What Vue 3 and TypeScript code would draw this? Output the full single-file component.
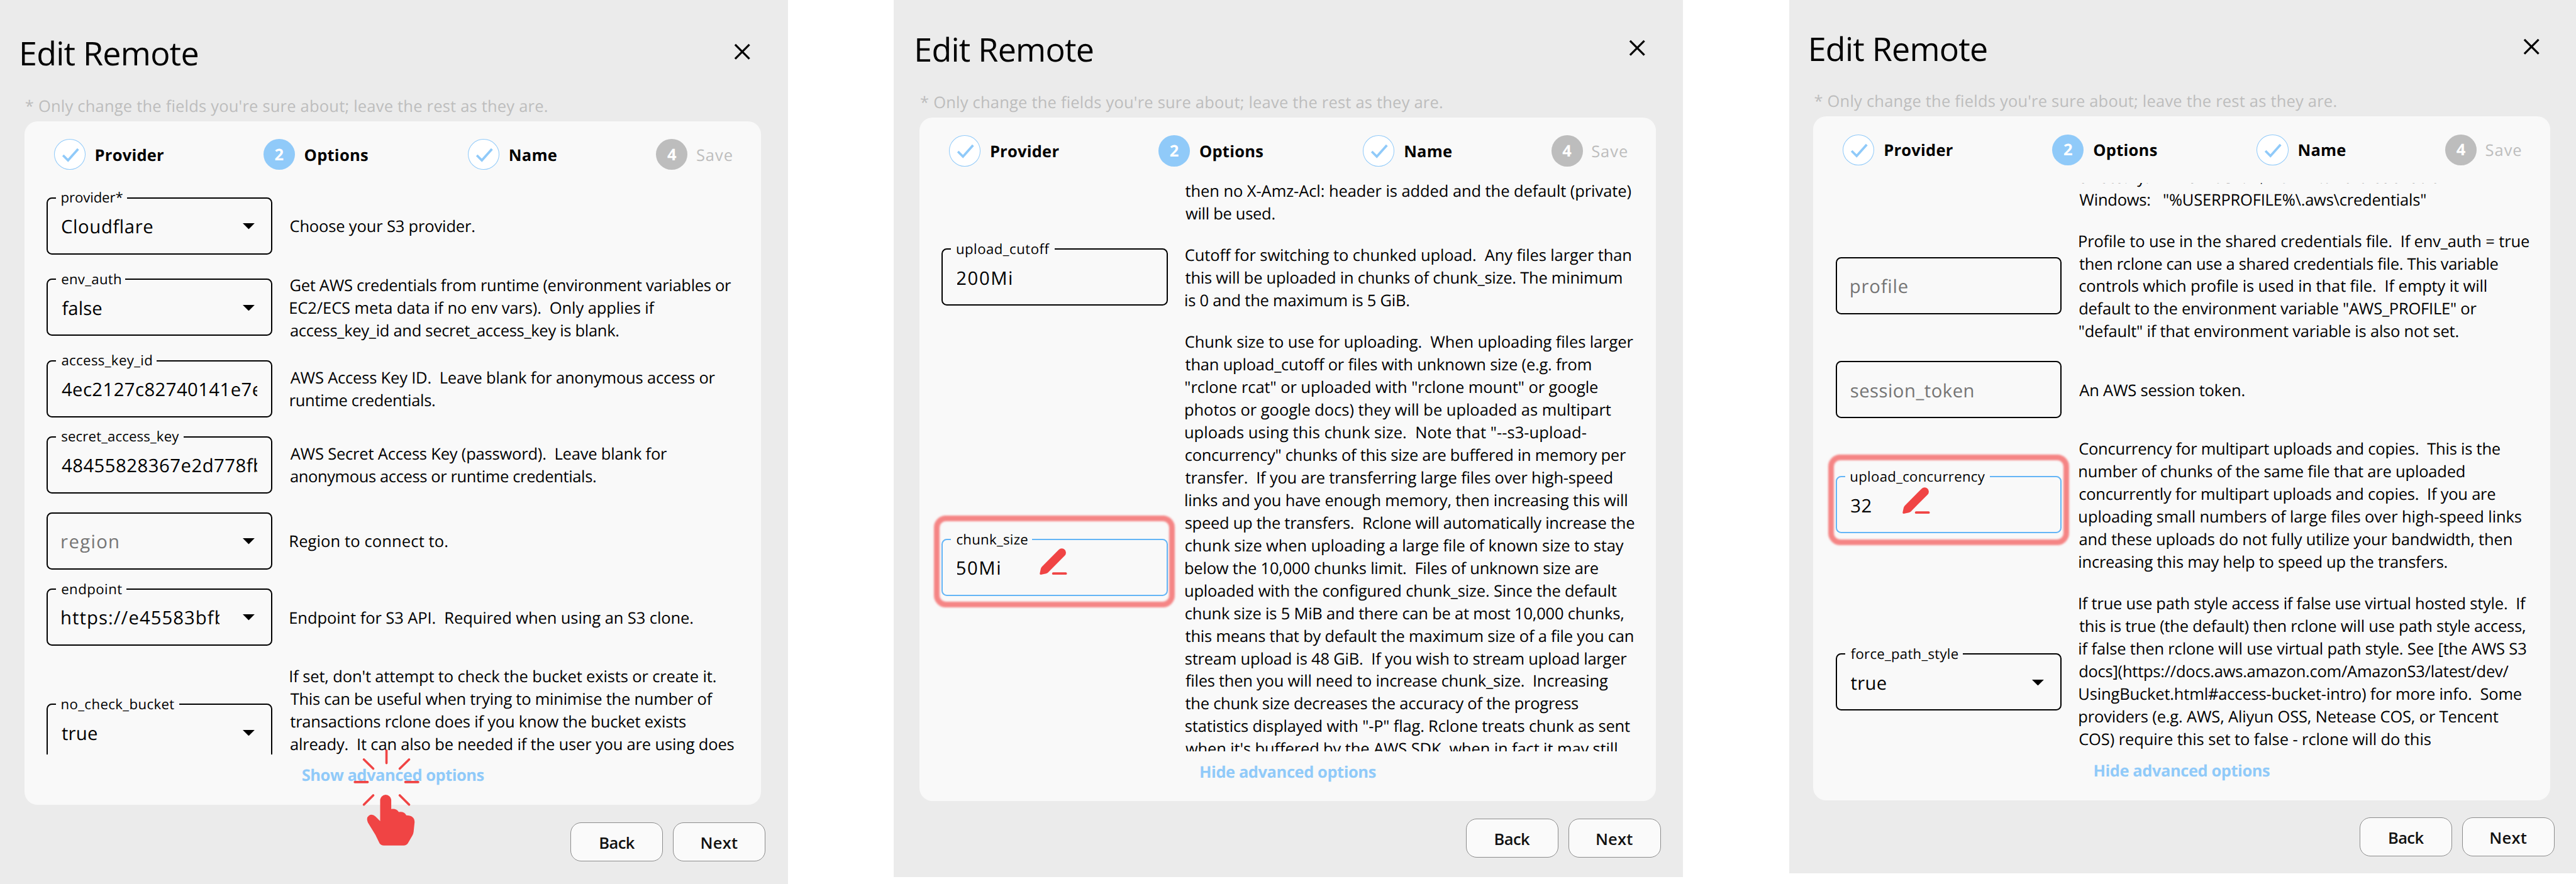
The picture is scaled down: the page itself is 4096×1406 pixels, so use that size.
<script setup lang="ts">
type Line = [string, number]
interface Field {
  label?: string
  labelW?: number
  value: string
  valueW: number
  select?: boolean
  empty?: boolean
  focused?: boolean
  ring?: { left: number; top: number; width: number; height: number }
  pen?: { left: number; top: number }
}
interface Row { field?: Field; lines: Line[] }
interface Panel {
  cls: string
  start: number
  toggle: string
  toggleW: number
  toggleX: number
  click?: boolean
  rows: Row[]
}

const FAMILY = '"Open Sans"'
const ctx = document.createElement('canvas').getContext('2d')!

/* Tracks a line of text so that its ink spans `width` pixels from the left edge of its box. */
function fit(text: string, size: number, width: number, weight = 400) {
  if (!text) return {}
  ctx.font = `${weight} ${size * 10}px ${FAMILY}`
  const m = ctx.measureText(text)
  const ink = (m.actualBoundingBoxRight + m.actualBoundingBoxLeft) / 10
  const n = Math.max(1, text.length - 1)
  return {
    letterSpacing: `${((width - ink) / n).toFixed(3)}px`,
    marginLeft: `${(m.actualBoundingBoxLeft / 10).toFixed(2)}px`,
  }
}

const steps = [
  { n: '1', name: 'Provider', w: 114, x: 49.5, state: 'done' },
  { n: '2', name: 'Options', w: 106, x: 402, state: 'current' },
  { n: '3', name: 'Name', w: 78.5, x: 746, state: 'done' },
  { n: '4', name: 'Save', w: 59, x: 1063, state: 'todo' },
]

/* An empty line keeps its height: it stands for text scrolled out of the list. */
const panels: Panel[] = [
  {
    cls: 'first', start: 15.8, toggle: 'Show advanced options', toggleW: 306, toggleX: 467.5, click: true,
    rows: [
      { field: { label: 'provider*', labelW: 102, value: 'Cloudflare', valueW: 152.5, select: true },
        lines: [['Choose your S3 provider.', 310]] },
      { field: { label: 'env_auth', labelW: 99, value: 'false', valueW: 66.7, select: true },
        lines: [
          ['Get AWS credentials from runtime (environment variables or', 742],
          ['EC2/ECS meta data if no env vars).  Only applies if', 614],
          ['access_key_id and secret_access_key is blank.', 552.5],
        ] },
      { field: { label: 'access_key_id', labelW: 151, value: '4ec2127c82740141e7e', valueW: 336 },
        lines: [
          ['AWS Access Key ID.  Leave blank for anonymous access or', 715],
          ['runtime credentials.', 243],
        ] },
      { field: { label: 'secret_access_key', labelW: 197, value: '48455828367e2d778fb', valueW: 339 },
        lines: [
          ['AWS Secret Access Key (password).  Leave blank for', 634],
          ['anonymous access or runtime credentials.', 514],
        ] },
      { field: { value: 'region', valueW: 95, select: true, empty: true },
        lines: [['Region to connect to.', 264.5]] },
      { field: { label: 'endpoint', labelW: 101, value: 'https://e45583bfb', valueW: 274, select: true },
        lines: [['Endpoint for S3 API.  Required when using an S3 clone.', 677.5]] },
      { field: { label: 'no_check_bucket', labelW: 189, value: 'true', valueW: 59, select: true },
        lines: [
          ["If set, don't attempt to check the bucket exists or create it.", 716],
          ['This can be useful when trying to minimise the number of', 711.5],
          ['transactions rclone does if you know the bucket exists', 665.5],
          ['already.  It can also be needed if the user you are using does', 746.5],
          ['', 0],
          ['', 0],
        ] },
    ],
  },
  {
    cls: 'second', start: -8.5, toggle: 'Hide advanced options', toggleW: 295, toggleX: 473,
    rows: [
      { lines: [
        ['then no X-Amz-Acl: header is added and the default (private)', 750],
        ['will be used.', 150],
      ] },
      { field: { label: 'upload_cutoff', labelW: 156, value: '200Mi', valueW: 92 },
        lines: [
          ['Cutoff for switching to chunked upload.  Any files larger than', 750],
          ['this will be uploaded in chunks of chunk_size. The minimum', 734.6],
          ['is 0 and the maximum is 5 GiB.', 376.4],
        ] },
      { field: { label: 'chunk_size', labelW: 118.7, value: '50Mi', valueW: 72, focused: true,
          ring: { left: -15.5, top: -41, width: 405, height: 154 }, pen: { left: 163, top: 13.5 } },
        lines: [
          ['Chunk size to use for uploading.  When uploading files larger', 753.7],
          ['than upload_cutoff or files with unknown size (e.g. from', 682.6],
          ['"rclone rcat" or uploaded with "rclone mount" or google', 693.8],
          ['photos or google docs) they will be uploaded as multipart', 716.4],
          ['uploads using this chunk size.  Note that "--s3-upload-', 674.8],
          ['concurrency" chunks of this size are buffered in memory per', 741.5],
          ['transfer.  If you are transferring large files over high-speed', 718],
          ['links and you have enough memory, then increasing this will', 743],
          ['speed up the transfers.  Rclone will automatically increase the', 755.4],
          ['chunk size when uploading a large file of known size to stay', 738],
          ['below the 10,000 chunks limit.  Files of unknown size are', 694.7],
          ['uploaded with the configured chunk_size. Since the default', 726],
          ['chunk size is 5 MiB and there can be at most 10,000 chunks,', 737],
          ['this means that by default the maximum size of a file you can', 753.7],
          ['stream upload is 48 GiB.  If you wish to stream upload larger', 743],
          ['files then you will need to increase chunk_size.  Increasing', 711],
          ['the chunk size decreases the accuracy of the progress', 661],
          ['statistics displayed with "-P" flag. Rclone treats chunk as sent', 748.5],
          ["when it's buffered by the AWS SDK, when in fact it may still", 726],
          ['', 0],
          ['', 0],
        ] },
    ],
  },
  {
    cls: 'third', start: -30.5, toggle: 'Hide advanced options', toggleW: 295, toggleX: 473,
    rows: [
      { lines: [
        ['directory.    Linux/OSX: "$HOME/.aws/credentials"', 616],
        ['Windows:   "%USERPROFILE%\\.aws\\credentials"', 583],
      ] },
      { field: { value: 'profile', valueW: 95, empty: true },
        lines: [
          ['Profile to use in the shared credentials file.  If env_auth = true', 756.8],
          ['then rclone can use a shared credentials file. This variable', 704.6],
          ['controls which profile is used in that file.  If empty it will', 684.9],
          ['default to the environment variable "AWS_PROFILE" or', 668.6],
          ['"default" if that environment variable is also not set.', 637.7],
        ] },
      { field: { value: 'session_token', valueW: 206, empty: true },
        lines: [['An AWS session token.', 277.7]] },
      { field: { label: 'upload_concurrency', labelW: 225.4, value: '32', valueW: 34, focused: true,
          ring: { left: -14.5, top: -39, width: 405, height: 153 }, pen: { left: 110.5, top: 16.5 } },
        lines: [
          ['Concurrency for multipart uploads and copies.  This is the', 708],
          ['number of chunks of the same file that are uploaded', 648],
          ['concurrently for multipart uploads and copies.  If you are', 700],
          ['uploading small numbers of large files over high-speed links', 744],
          ['and these uploads do not fully utilize your bandwidth, then', 727.7],
          ['increasing this may help to speed up the transfers.', 618.8],
        ] },
      { field: { label: 'force_path_style', labelW: 180, value: 'true', valueW: 59, select: true },
        lines: [
          ['If true use path style access if false use virtual hosted style.  If', 752.5],
          ['this is true (the default) then rclone will use path style access,', 750],
          ['if false then rclone will use virtual path style. See [the AWS S3', 751.7],
          ['docs](https://docs.aws.amazon.com/AmazonS3/latest/dev/', 722.5],
          ['UsingBucket.html#access-bucket-intro) for more info.  Some', 744],
          ['providers (e.g. AWS, Aliyun OSS, Netease COS, or Tencent', 705.4],
          ['COS) require this set to false - rclone will do this', 591.4],
          ['', 0],
        ] },
    ],
  },
]
</script>

<template>
  <main class="board">
    <section v-for="p in panels" :key="p.cls" class="panel" :class="p.cls">
      <div class="content">
        <header class="head">
          <h1 class="title"><span :style="fit('Edit Remote', 55, 295.5)">Edit Remote</span></h1>
          <svg class="close" viewBox="0 0 28 28"><path d="M2 2 26 26M26 2 2 26" /></svg>
        </header>
        <p class="hint">
          <span :style="fit('* Only change the fields you\'re sure about; leave the rest as they are.', 27, 878)">* Only change the fields you're sure about; leave the rest as they are.</span>
        </p>
        <div class="card">
          <nav class="steps">
            <div v-for="s in steps" :key="s.n" class="step" :class="s.state" :style="{ '--x': s.x + 'px' }">
              <span class="dot">
                <svg v-if="s.state === 'done'" viewBox="0 0 53 52"><path d="M15 27.5 23.5 36 40.5 17" /></svg>
                <b v-else>{{ s.n }}</b>
              </span>
              <span class="name"><span :style="fit(s.name, 27, s.w, s.state === 'todo' ? 400 : 700)">{{ s.name }}</span></span>
            </div>
          </nav>
          <div class="list">
            <div class="rows" :style="{ marginTop: p.start + 'px' }">
              <div v-for="(r, i) in p.rows" :key="i" class="row">
                <div class="slot">
                  <div v-if="r.field" class="field" :class="{ focused: r.field.focused, select: r.field.select, empty: r.field.empty }">
                    <span v-if="r.field.label" class="label" :style="{ width: r.field.labelW! + 18 + 'px' }">
                      <span :style="fit(r.field.label, 23.5, r.field.labelW!)">{{ r.field.label }}</span>
                    </span>
                    <span class="value"><span :style="fit(r.field.value, 31, r.field.valueW)">{{ r.field.value }}</span></span>
                    <svg v-if="r.field.select" class="arrow" viewBox="0 0 20 10"><path d="M0 0H20L10 10Z" /></svg>
                    <span v-if="r.field.ring" class="ring" :style="{ left: r.field.ring.left + 'px', top: r.field.ring.top + 'px', width: r.field.ring.width + 'px', height: r.field.ring.height + 'px' }"></span>
                    <svg v-if="r.field.pen" class="pen" viewBox="0 0 138 134" :style="{ left: r.field.pen.left + 'px', top: r.field.pen.top + 'px' }">
                      <path d="M97 7 12 93Q7 98 6 104L1 127Q0 134 7 133L33 128Q39 126 43 122L127 37A20.5 20.5 0 0 0 97 7Z" />
                      <rect x="63" y="121" width="75" height="12.5" rx="6" />
                    </svg>
                  </div>
                </div>
                <div class="desc">
                  <div v-for="(l, j) in r.lines" :key="j" class="line"><span :style="fit(l[0], 27, l[1])">{{ l[0] }}</span></div>
                </div>
              </div>
            </div>
          </div>
          <div class="toggle" :style="{ paddingLeft: p.toggleX + 'px' }">
            <span :style="fit(p.toggle, 27, p.toggleW, 700)">{{ p.toggle }}</span>
          </div>
          <svg v-if="p.click" class="tap" viewBox="310 60 340 490">
            <path class="rays" d="M480 68V132M366 114 413 160M594 114 547 160M320 228H385M575 228H640M366 342 413 295M594 342 547 295" />
            <path class="hand" d="M448 425V320A28 28 0 0 1 504 320V364Q530 360 542 379Q570 376 580 396Q621 396 622 430L617 478Q616 488 611 497L588 537Q581 548 567 548H466Q452 548 445 537L424 494 386 432Q376 408 391 397Q408 387 424 401Z" />
          </svg>
        </div>
        <footer class="actions">
          <button class="btn"><span :style="fit('Back', 27, 58, 600)">Back</span></button>
          <button class="btn"><span :style="fit('Next', 27, 60, 600)">Next</span></button>
        </footer>
      </div>
    </section>
  </main>
</template>

<style>
html,
body {
  margin: 0;
  background: #fff;
  overflow: hidden;
}
</style>

<style scoped>
.board {
  zoom: 0.945085;
  display: flex;
  align-items: flex-start;
  width: 4334px;
  height: 1488px;
  overflow: hidden;
  background: #fff;
  color: #000;
  font-family: "Open Sans", "Noto Sans", sans-serif;
  font-size: 27px;
  text-rendering: geometricPrecision;
  white-space: pre;
}
.board * {
  box-sizing: border-box;
}
.panel {
  flex: none;
  background: #ebebeb;
  overflow: hidden;
}
.first {
  width: 1326px;
  height: 1488px;
}
.second {
  width: 1328px;
  height: 1476px;
  margin-left: 178px;
  padding-left: 2px;
}
.third {
  width: 1324px;
  height: 1470px;
  margin-left: 178px;
}
.second .content {
  margin-top: -6px;
}
.third .content {
  margin-top: -8px;
}
.content {
  width: 1326px;
  height: 1488px;
  padding: 0 38px 0 41px;
  display: flex;
  flex-direction: column;
}
.head {
  height: 154px;
  flex: none;
  display: flex;
  justify-content: space-between;
  padding: 53px 25px 0 0;
}
.title {
  margin: 0 0 0 -4px;
  font-size: 55px;
  font-weight: 400;
  line-height: 73px;
}
.close {
  width: 28px;
  height: 28px;
  margin-top: 19.5px;
  stroke: #000;
  stroke-width: 3.4;
  fill: none;
}
.hint {
  margin: 0;
  flex: none;
  height: 50px;
  padding-left: 2px;
  line-height: 49px;
  color: #bdbdbd;
}
.card {
  position: relative;
  flex: none;
  width: 1239.5px;
  height: 1150.5px;
  border-radius: 22px;
  background: #f9f9f9;
}
.steps {
  height: 112px;
  display: grid;
  grid-template: 112px / 1fr;
}
.step {
  grid-area: 1 / 1;
  margin-left: var(--x);
  height: 52px;
  margin-top: 30px;
  width: 180px;
  display: flex;
  align-items: center;
}
.dot {
  width: 53px;
  height: 52px;
  border-radius: 50%;
  flex: none;
  display: flex;
  align-items: center;
  justify-content: center;
  color: #fff;
  line-height: 38px;
}
.dot b {
  padding-top: 2px;
}
.done .dot {
  background: #fff;
  border: 2px solid #90caf9;
}
.dot svg {
  width: 53px;
  height: 52px;
  flex: none;
  fill: none;
  stroke: #90caf9;
  stroke-width: 4;
}
.current .dot {
  background: #90caf9;
}
.todo .dot {
  background: #bdbdbd;
}
.name {
  margin-left: 18px;
  padding-top: 4.5px;
  font-weight: 700;
  line-height: 38px;
}
.current .name {
  margin-left: 17px;
}
.todo .name {
  font-weight: 400;
  color: #bdbdbd;
  margin-left: 15.5px;
}
.list {
  height: 954px;
  overflow: hidden;
  display: flow-root;
}
.rows {
  display: flex;
  flex-direction: column;
  gap: 31.8px;
}
.row {
  flex: none;
  display: flex;
  align-items: center;
}
.slot {
  width: 447.5px;
  padding-left: 37.5px;
  flex: none;
}
.field {
  position: relative;
  width: 380px;
  height: 96.3px;
  border: 2.2px solid #000;
  border-radius: 9px;
  display: flex;
  align-items: center;
  padding: 4px 0 0 23.5px;
}
.field.focused {
  border-color: #64b5f6;
}
.label {
  position: absolute;
  left: 13.5px;
  top: -17px;
  height: 32px;
  padding-left: 10px;
  background: #f9f9f9;
  font-size: 23.5px;
  line-height: 32px;
}
.value {
  flex: none;
  width: 329px;
  overflow: hidden;
  font-size: 31px;
  line-height: 44px;
}
.select .value {
  width: 265px;
}
.empty .value {
  color: #757575;
}
.arrow {
  width: 20px;
  height: 10px;
  margin: -2px 0 0 39.5px;
}
.ring {
  position: absolute;
  border: 10px solid #f58585;
  border-radius: 20px;
  filter: blur(1.8px);
}
.pen {
  position: absolute;
  width: 46px;
  height: 44.7px;
  fill: #f04444;
}
.desc {
  position: relative;
  top: 2.5px;
}
.line {
  height: 38.05px;
  line-height: 38.05px;
}
.toggle {
  height: 84px;
  padding-top: 17px;
  line-height: 38px;
  font-weight: 700;
  color: #90caf9;
}
.tap {
  position: absolute;
  left: 552.3px;
  top: 1056px;
  width: 113.3px;
  height: 163.3px;
  z-index: 2;
  overflow: visible;
}
.rays {
  fill: none;
  stroke: #f04444;
  stroke-width: 11.5;
  stroke-linecap: round;
}
.hand {
  fill: #f04444;
}
.actions {
  display: flex;
  justify-content: flex-end;
  gap: 17px;
  padding-top: 29.5px;
}
.btn {
  width: 155.5px;
  height: 65.5px;
  padding: 4px 0 0 2px;
  border: 2px solid #8c8c8c;
  border-radius: 18px;
  background: #fafafa;
  color: #111;
  font: 600 27px/38px "Open Sans", "Noto Sans", sans-serif;
}
</style>
